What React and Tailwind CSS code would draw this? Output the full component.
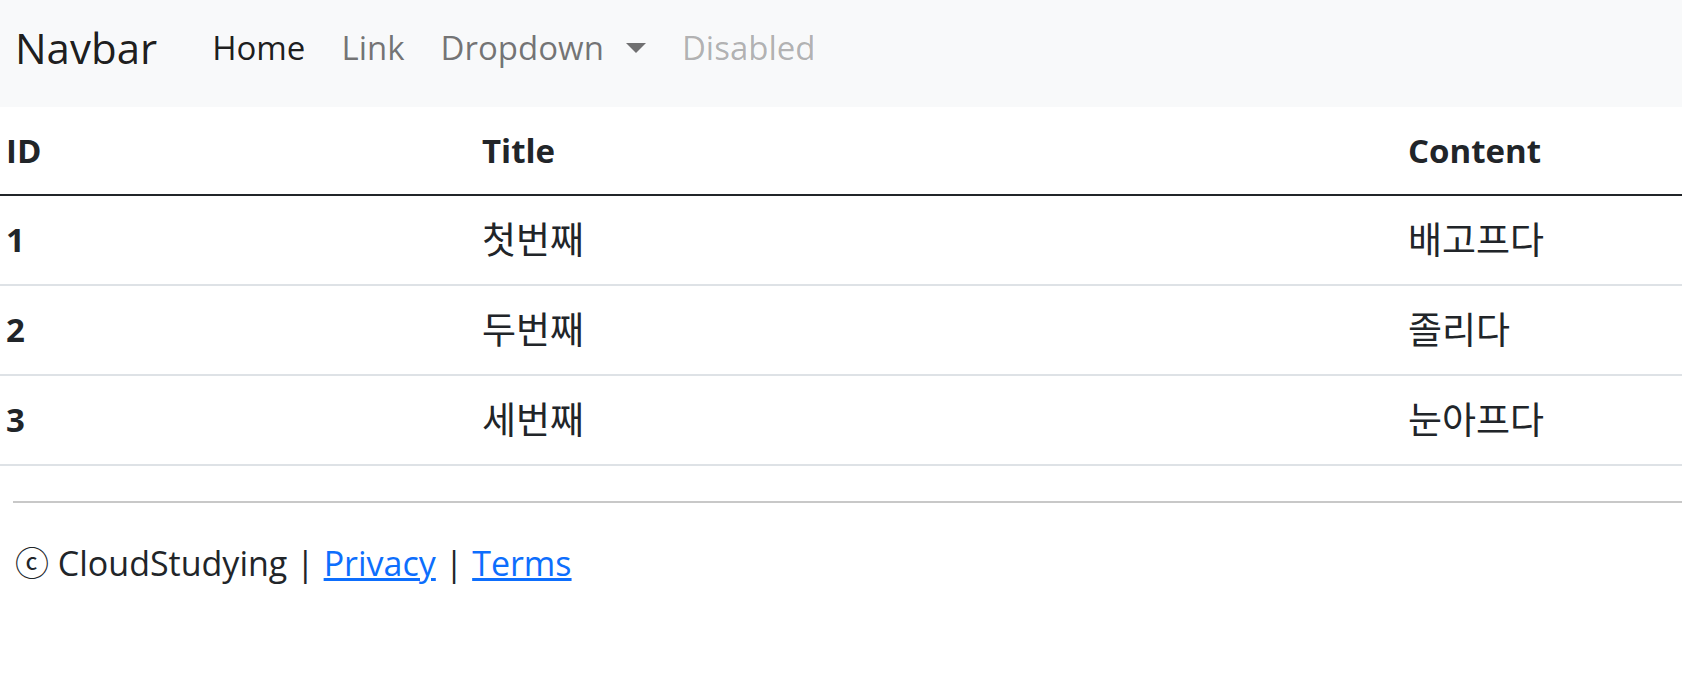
import React from "react";

const rows = [
  { id: 1, title: "첫번째", content: "배고프다" },
  { id: 2, title: "두번째", content: "졸리다" },
  { id: 3, title: "세번째", content: "눈아프다" },
];

const font = {
  fontFamily: '"Open Sans", "Noto Sans CJK KR", sans-serif',
};

const App = () => {
  return (
    <div className="min-h-screen bg-white text-[#212529]" style={font}>
      {/* navbar */}
      <nav className="flex items-center h-[107px] bg-[#f8f9fa] pl-[15px] pb-[12px]">
        <a href="#" className="text-[42px] text-black/90 mr-[55px]">
          Navbar
        </a>
        <ul className="flex items-center gap-[36px] text-[33px]">
          <li className="text-black/90">Home</li>
          <li className="text-black/55">Link</li>
          <li className="flex items-center text-black/55">
            Dropdown
            <span className="ml-[22px] inline-block w-0 h-0 border-l-[10px] border-r-[10px] border-t-[10px] border-l-transparent border-r-transparent border-t-black/55"></span>
          </li>
          <li className="text-black/30">Disabled</li>
        </ul>
      </nav>

      {/* table */}
      <table className="w-full border-collapse text-[33px]">
        <thead>
          <tr className="h-[88px] border-b-2 border-[#212529]">
            <th className="w-[474px] text-left font-bold px-[6px]">ID</th>
            <th className="w-[926px] text-left font-bold px-[8px]">Title</th>
            <th className="text-left font-bold px-[8px]">Content</th>
          </tr>
        </thead>
        <tbody>
          {rows.map((r) => (
            <tr key={r.id} className="h-[90px] border-b-2 border-[#dee2e6]">
              <th className="text-left font-bold px-[6px]">{r.id}</th>
              <td className="px-[8px] text-[37px]">{r.title}</td>
              <td className="px-[8px] text-[37px]">{r.content}</td>
            </tr>
          ))}
        </tbody>
      </table>

      {/* footer */}
      <footer className="pl-[13px] pt-[35px]">
        <hr className="border-t-2 border-[#c8c8c8]" />
        <p className="mt-[35px] text-[34px] pl-[2px]">
          ⓒ CloudStudying |{" "}
          <a href="#" className="text-[#0d6efd] underline">
            Privacy
          </a>{" "}
          |{" "}
          <a href="#" className="text-[#0d6efd] underline">
            Terms
          </a>
        </p>
      </footer>
    </div>
  );
};

export default App;
